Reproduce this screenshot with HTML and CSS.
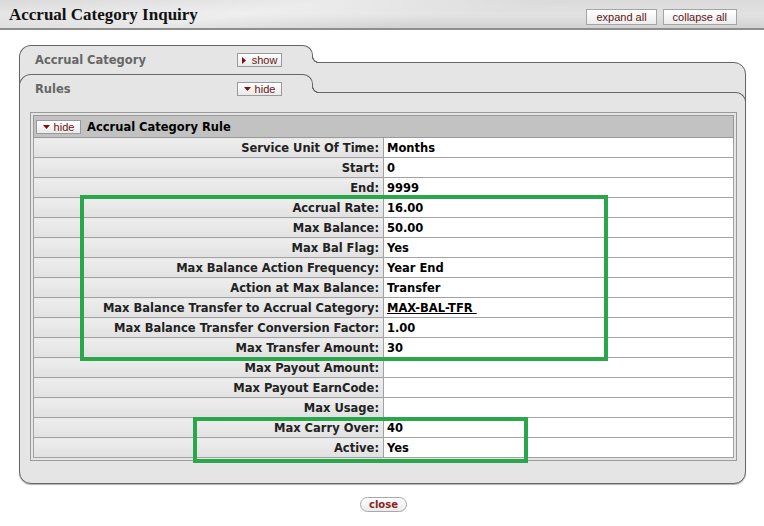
FILE: index.html
```html
<!DOCTYPE html>
<html lang="en">
<head>
<meta charset="utf-8">
<title>Accrual Category Inquiry</title>
<link rel="stylesheet" href="styles.css">
</head>
<body>
<header class="page-head">
  <h1 class="page-title">Accrual Category Inquiry</h1>
  <div class="head-actions">
    <button class="head-btn">expand all</button>
    <button class="head-btn">collapse all</button>
  </div>
</header>

<main class="tabs">
  <div class="tab-head">
    <div class="tab">
      <span class="tab-title">Accrual Category</span>
      <button class="toggle"><svg class="tri-r" width="4" height="7" viewBox="0 0 4 7"><path d="M0 0L4 3.5L0 7Z"/></svg><span>show</span></button>
    </div>
  </div>
  <div class="tab-body outer">
    <div class="tab-head inner-head">
      <div class="tab tall">
        <span class="tab-title">Rules</span>
        <button class="toggle"><svg class="tri-d" width="7" height="4" viewBox="0 0 7 4"><path d="M0 0H7L3.5 4Z"/></svg><span>hide</span></button>
      </div>
    </div>
    <div class="tab-body inner">
      <div class="rule-box">
        <table class="rule-table">
          <thead>
            <tr>
              <th colspan="2" class="rule-head">
                <div class="rule-head-row">
                  <button class="toggle"><svg class="tri-d" width="7" height="4" viewBox="0 0 7 4"><path d="M0 0H7L3.5 4Z"/></svg><span>hide</span></button>
                  <span>Accrual Category Rule</span>
                </div>
              </th>
            </tr>
          </thead>
          <tbody>
            <tr><th>Service Unit Of Time:</th><td>Months</td></tr>
            <tr><th>Start:</th><td>0</td></tr>
            <tr><th>End:</th><td>9999</td></tr>
            <tr><th>Accrual Rate:</th><td>16.00</td></tr>
            <tr><th>Max Balance:</th><td>50.00</td></tr>
            <tr><th>Max Bal Flag:</th><td>Yes</td></tr>
            <tr><th>Max Balance Action Frequency:</th><td>Year End</td></tr>
            <tr><th>Action at Max Balance:</th><td>Transfer</td></tr>
            <tr><th>Max Balance Transfer to Accrual Category:</th><td><a class="link" href="#">MAX-BAL-TFR&nbsp;</a></td></tr>
            <tr><th>Max Balance Transfer Conversion Factor:</th><td>1.00</td></tr>
            <tr><th>Max Transfer Amount:</th><td>30</td></tr>
            <tr><th>Max Payout Amount:</th><td></td></tr>
            <tr><th>Max Payout EarnCode:</th><td></td></tr>
            <tr><th>Max Usage:</th><td></td></tr>
            <tr><th>Max Carry Over:</th><td>40</td></tr>
            <tr><th>Active:</th><td>Yes</td></tr>
          </tbody>
        </table>
      </div>
    </div>
  </div>
</main>

<div class="actions">
  <button class="close-btn">close</button>
</div>

<div class="callout callout-main"></div>
<div class="callout callout-carry"></div>
</body>
</html>
```

FILE: styles.css
```css
* { box-sizing: border-box; }

html, body { margin: 0; padding: 0; }

body {
  position: relative;
  width: 764px;
  height: 526px;
  overflow: hidden;
  background: #fff;
  color: #000;
  font-family: "DejaVu Sans", Verdana, sans-serif;
  font-size: 11.5px;
}

button {
  margin: 0;
  padding: 0;
  cursor: pointer;
}

/* ---------- page header ---------- */
.page-head {
  display: flex;
  align-items: flex-start;
  justify-content: space-between;
  height: 30px;
  padding: 5px 27px 0 9px;
  border-bottom: 2px solid #8e8e8e;
  background:
    linear-gradient(172deg, rgba(255,255,255,0) 0%, rgba(255,255,255,.45) 35%, rgba(255,255,255,0) 60%),
    linear-gradient(180deg, #d9d9d9 0%, #e2e2e2 50%, #d3d3d3 100%);
}

.page-title {
  margin: 0;
  font: bold 17px/20px "Liberation Serif", "Times New Roman", serif;
  color: #111;
}

.head-actions {
  display: flex;
  gap: 6px;
  margin-top: 4px;
}

.head-btn {
  height: 16px;
  padding: 0 9px;
  border: 1px solid #a4a4a4;
  background: linear-gradient(#ffffff, #ececec);
  font: 11px/14px "Liberation Sans", Arial, sans-serif;
  color: #5e1616;
}

/* ---------- tabs ---------- */
.tabs {
  margin: 15px 18px 0 19px;
}

.tab-head {
  display: flex;
  align-items: flex-start;
  height: 17px;
}

.tab {
  position: relative;
  z-index: 1;
  display: flex;
  align-items: flex-start;
  justify-content: space-between;
  width: 294px;
  height: 18px;
  padding: 7px 30px 0 15px;
  background: #e5e5e5;
  border: 1px solid #666;
  border-bottom: 0;
  border-radius: 12px 10px 0 0;
}

.tab::after {
  content: "";
  position: absolute;
  left: 100%;
  bottom: 0;
  width: 7px;
  height: 7px;
  background: radial-gradient(circle at 100% 0, rgba(229,229,229,0) 5.6px, #666 6.1px, #666 6.9px, #e5e5e5 7.4px);
}

.tab-title {
  font-weight: bold;
  line-height: 14px;
  color: #666;
}

.toggle {
  display: inline-flex;
  align-items: center;
  justify-content: center;
  gap: 4px;
  width: 45px;
  height: 14px;
  border: 1px solid #9a9a9a;
  background: linear-gradient(#ffffff, #e9e9e9);
  font: 11px/12px "Liberation Sans", Arial, sans-serif;
  color: #6a1414;
}

.toggle svg { fill: #7a1010; display: block; }
.toggle .tri-r { margin-right: 2px; }

.tab-body.outer {
  padding: 11px 0 12px;
  background: #e5e5e5;
  border: 1px solid #666;
  border-radius: 0 12px 12px 12px;
  box-shadow: 0 1px 1px rgba(0,0,0,.3);
}

.inner-head {
  margin: 0 -1px;
  height: 18px;
}

.tab.tall { height: 19px; }

.tab-body.inner {
  margin: 0 -1px;
  padding: 19px 8px 10px 11px;
  border-top: 1px solid #666;
  border-right: 1px solid #666;
  border-top-right-radius: 10px;
}

/* ---------- rule table ---------- */
.rule-box {
  padding: 2px;
  border: 1px solid #9a9a9a;
}

.rule-table {
  width: 100%;
  table-layout: fixed;
  border-collapse: collapse;
  border: 1px solid #999;
}

.rule-head {
  height: 22px;
  padding: 0 0 0 2px;
  background: #c2c2c2;
  text-align: left;
  border: 1px solid #999;
}

.rule-head-row {
  display: flex;
  align-items: center;
  gap: 6px;
  font-weight: bold;
  color: #000;
}

.rule-table tbody th,
.rule-table tbody td {
  height: 20px;
  line-height: 18px;
  border: 1px solid #a2a2a2;
  font-weight: bold;
  white-space: nowrap;
}

.rule-table tbody th {
  width: 50%;
  padding: 0 4px 0 0;
  text-align: right;
  color: #222;
  background: linear-gradient(180deg, #eeeeee 0%, #e1e1e1 100%);
}

.rule-table tbody td {
  padding: 0 0 0 3px;
  background: #fff;
  color: #000;
}

.link {
  color: #000;
  text-decoration: underline;
}

/* ---------- bottom action ---------- */
.actions {
  display: flex;
  justify-content: center;
  margin-top: 13px;
  padding-left: 3px;
}

.close-btn {
  width: 47px;
  height: 15px;
  border: 1px solid #a8a8a8;
  border-radius: 8px;
  background: linear-gradient(#ffffff, #ebebeb);
  font: bold 10px/13px "DejaVu Sans", Verdana, sans-serif;
  color: #8a2424;
}

/* ---------- annotation callouts ---------- */
.callout {
  position: absolute;
  border: 4px solid #29a74a;
  pointer-events: none;
}

.callout-main {
  left: 80px;
  top: 195px;
  width: 528px;
  height: 166px;
}

.callout-carry {
  left: 193px;
  top: 417px;
  width: 335px;
  height: 46px;
}
```
